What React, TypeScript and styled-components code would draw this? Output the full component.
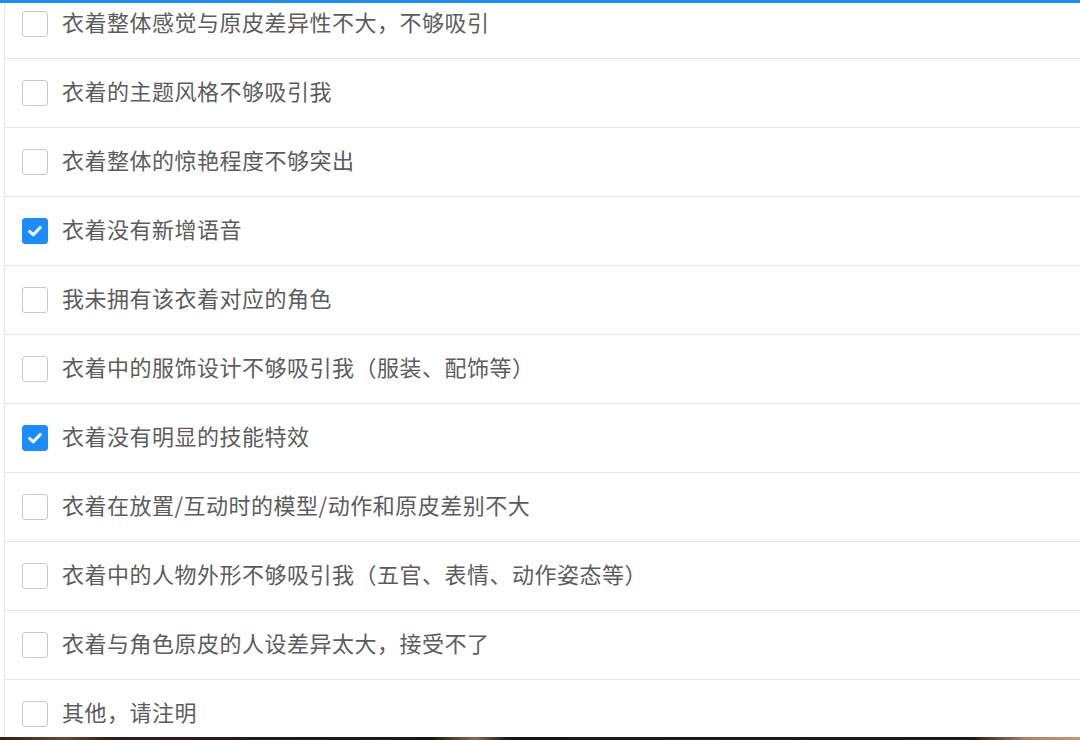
import { FC } from "react";
import styled, { createGlobalStyle } from "styled-components";

const GlobalStyle = createGlobalStyle`
  html, body {
    margin: 0;
    padding: 0;
    background: #ffffff;
  }
  body {
    font-family: "Noto Sans CJK SC", "Noto Sans", sans-serif;
  }
`;

const Frame = styled.div`
  width: 1080px;
  height: 740px;
  overflow: hidden;
  display: flex;
  flex-direction: column;
  background: #ffffff;
`;

const TopBar = styled.div`
  position: relative;
  z-index: 1;
  flex: 0 0 3px;
  background: #1b8df2;
`;

const List = styled.div`
  flex: 1;
  min-height: 0;
  overflow: hidden;
  margin: -13px 0 0 4px;
  border-left: 1px solid #e6e6e6;
  display: flex;
  flex-direction: column;
`;

const Row = styled.label`
  flex: 0 0 69px;
  box-sizing: border-box;
  display: flex;
  align-items: center;
  gap: 14px;
  padding-left: 17px;
  border-bottom: 1px solid #e6e6e6;
`;

const Box = styled.span<{ $checked: boolean }>`
  flex: 0 0 auto;
  width: 26px;
  height: 26px;
  box-sizing: border-box;
  border-radius: 3px;
  border: 1px solid ${(p) => (p.$checked ? "#1a8cff" : "#c9c9c9")};
  background: ${(p) => (p.$checked ? "#1a8cff" : "#ffffff")};
  display: flex;
  align-items: center;
  justify-content: center;
`;

const Text = styled.span`
  font-size: 22px;
  letter-spacing: 0.5px;
  line-height: 1;
  padding-bottom: 6px;
  color: #5c5c5c;
  white-space: nowrap;
`;

const BottomStrip = styled.div`
  flex: 0 0 3px;
  background: linear-gradient(
    90deg,
    #2b1f1c 0%,
    #6b4a36 6%,
    #2b1f1c 10%,
    #1c1416 40%,
    #8a6a4e 44%,
    #1c1416 47%,
    #221819 90%,
    #a78464 95%,
    #c29c78 100%
  );
`;

const options: { label: string; checked: boolean }[] = [
  { label: "衣着整体感觉与原皮差异性不大，不够吸引", checked: false },
  { label: "衣着的主题风格不够吸引我", checked: false },
  { label: "衣着整体的惊艳程度不够突出", checked: false },
  { label: "衣着没有新增语音", checked: true },
  { label: "我未拥有该衣着对应的角色", checked: false },
  { label: "衣着中的服饰设计不够吸引我（服装、配饰等）", checked: false },
  { label: "衣着没有明显的技能特效", checked: true },
  { label: "衣着在放置/互动时的模型/动作和原皮差别不大", checked: false },
  { label: "衣着中的人物外形不够吸引我（五官、表情、动作姿态等）", checked: false },
  { label: "衣着与角色原皮的人设差异太大，接受不了", checked: false },
  { label: "其他，请注明", checked: false },
];

const Check: FC = () => (
  <svg width="18" height="18" viewBox="0 0 18 18" fill="none">
    <path
      d="M3.6 9.4 L7.4 12.8 L14.2 5.4"
      stroke="#ffffff"
      strokeWidth="3"
      strokeLinecap="round"
      strokeLinejoin="round"
    />
  </svg>
);

const App: FC = () => {
  return (
    <>
      <GlobalStyle />
      <Frame>
        <TopBar />
        <List>
          {options.map((o) => (
            <Row key={o.label}>
              <Box $checked={o.checked}>{o.checked && <Check />}</Box>
              <Text>{o.label}</Text>
            </Row>
          ))}
        </List>
        <BottomStrip />
      </Frame>
    </>
  );
};

export default App;
